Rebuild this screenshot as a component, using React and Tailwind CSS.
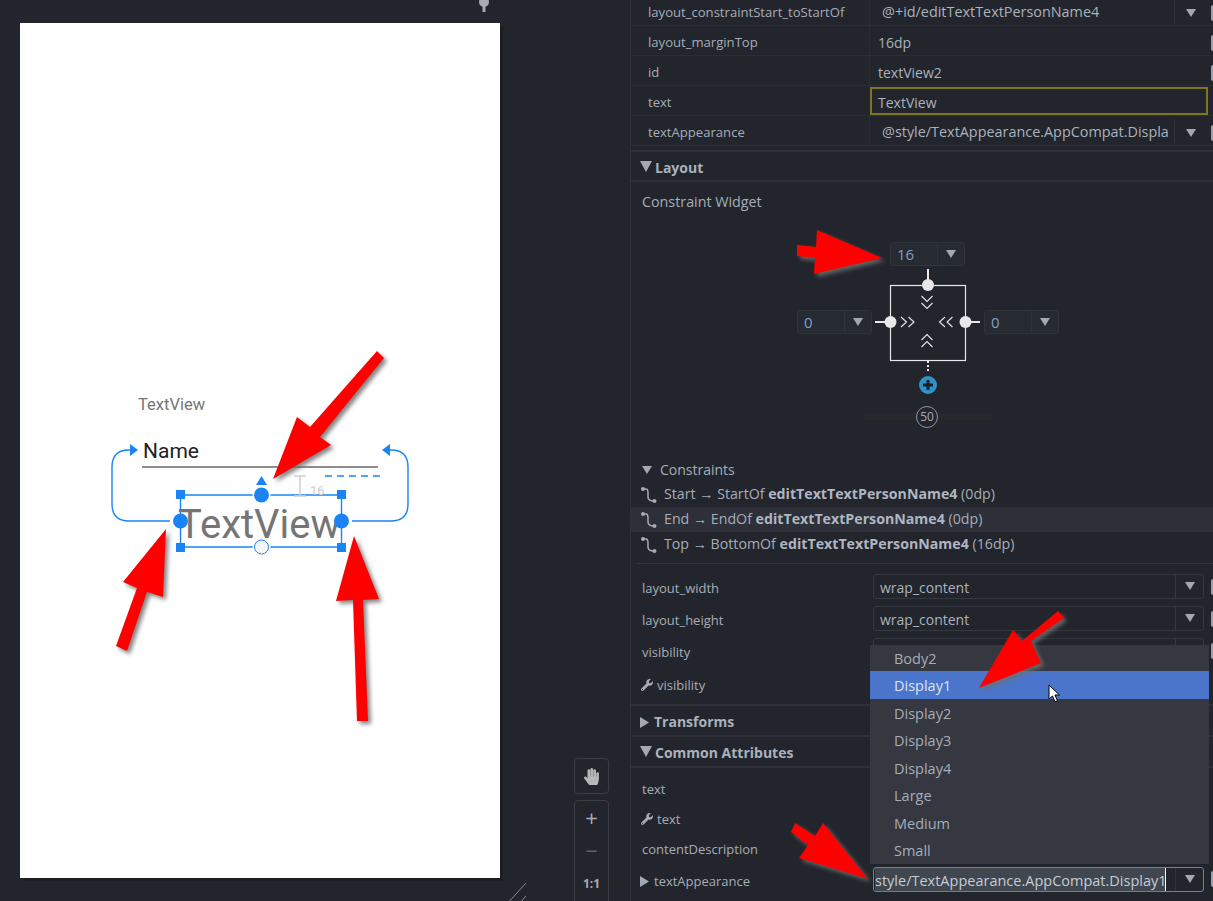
import React from "react";
import { FaWrench, FaHandPaper } from "react-icons/fa";

const Tri = ({ dir = "down", w, h, className = "" }) => {
  const pts = { down: "0,0 10,0 5,8", right: "0,0 9,5.5 0,11" }[dir];
  const vb = dir === "down" ? "0 0 10 8" : "0 0 9 11";
  return (
    <svg width={w || (dir === "down" ? 10 : 9)} height={h || (dir === "down" ? 8 : 11)} viewBox={vb} preserveAspectRatio="none" className={className}>
      <polygon points={pts} fill="#a3a9b3" />
    </svg>
  );
};

const Nub = () => <span className="absolute right-0 top-[9px] h-[16px] w-[2px] rounded-l-[2px] bg-[#9ba1ab]" />;

const TopRow = ({ label, value, drop, selected, big }) => (
  <div className="relative flex h-[30px] items-center border-b border-[#2b2e34]">
    <div className="w-[238px] shrink-0 pl-[17px] pt-[4px] text-[13.1px] text-[#a6adb7]">{label}</div>
    <div className={selected ? "ml-[1px] mr-[5px] flex h-[28px] flex-1 items-center border-[2px] border-[#7f7527] pl-[6px] text-[#aab2bd]" : "flex h-full flex-1 items-center border-l border-[#2b2e34] pl-[8px] text-[#aab2bd]"}>
      <span className={`pt-[4px] ${big ? "text-[14.4px]" : "text-[14px]"} ${drop ? "w-[296px] whitespace-nowrap pl-[4px]" : ""}`}>{value}</span>
      {drop && (
        <div className="flex h-[24px] w-[30px] items-center justify-center border-l border-[#2f3238] pl-[2px] pt-[4px]">
          <Tri />
        </div>
      )}
    </div>
    {(drop || !selected) && <Nub />}
  </div>
);

const Section = ({ title, open, className = "" }) => (
  <div className={`flex items-center gap-[3px] pl-[9px] text-[14px] font-bold text-[#a9b1bd] ${className}`}>
    <Tri dir={open ? "down" : "right"} w={open ? 12 : 9} h={open ? 11 : 11} className={open ? "-mt-[3px]" : "mr-[2px]"} />
    <span>{title}</span>
  </div>
);

const Squiggle = () => (
  <svg width="18" height="18" viewBox="0 0 18 18" className="shrink-0">
    <path d="M3 3 H6 C8 3 8 5 8 7 V11 C8 14 10 15 14 15" fill="none" stroke="#a5acb6" strokeWidth="1.5" />
    <circle cx="3" cy="3" r="2" fill="#a5acb6" />
    <circle cx="14.5" cy="15" r="2" fill="#a5acb6" />
  </svg>
);

const Constraint = ({ a, b, c, hi }) => (
  <div className={`flex h-[25px] items-center gap-[6px] pl-[9px] text-[14.2px] text-[#a6adb7] ${hi ? "bg-[#2d3038]" : ""}`}>
    <Squiggle />
    <span>
      {a} → {b} <b className="font-bold text-[#aeb6c2]">editTextTextPersonName4</b> ({c})
    </span>
  </div>
);

const NumDrop = ({ v, className = "" }) => (
  <div className={`flex h-[24px] w-[75px] items-center rounded-[3px] border border-[#2f333a] bg-[#262a31] ${className}`}>
    <span className="w-[46px] pl-[6px] text-[15px] text-[#7f9fc8]">{v}</span>
    <div className="flex h-full flex-1 items-center justify-center border-l border-[#2f333a]">
      <Tri />
    </div>
  </div>
);

const AttrRow = ({ label, value, wrench, tri, h = "h-[32px]" }) => (
  <div className={`relative flex items-center pl-[11px] ${h}`}>
    <div className="flex w-[231px] shrink-0 items-center gap-[4px] pt-[4px] text-[#a6adb7]">
      {wrench && <FaWrench className="-ml-[1px] text-[12px] text-[#a5acb6]" />}
      {tri && <Tri dir="right" className="-ml-[2px] mr-[1px]" />}
      <span>{label}</span>
    </div>
    {value && (
      <div className="flex h-[25px] w-[331px] items-center rounded-[3px] border border-[#33373e] pl-[6px] text-[14px] text-[#aab2bd]">
        <span className="flex-1 pt-[4px]">{value}</span>
        <div className="flex h-full w-[28px] items-center justify-center border-l border-[#33373e]">
          <Tri />
        </div>
      </div>
    )}
    {value && <Nub />}
  </div>
);

const popupItems = ["Body2", "Display1", "Display2", "Display3", "Display4", "Large", "Medium", "Small"];

const Arrows = () => (
  <svg width="1213" height="901" className="pointer-events-none absolute left-0 top-0 drop-shadow-[3px_3px_2px_rgba(110,110,110,0.85)]">
    <g fill="#ff0000">
      <polygon points="377,351 384,358 320,437 331,445 273,479 297,417 310,427" />
      <polygon points="166,529 163,597 147,592 127,651 116,646 137,588 123,582" />
      <polygon points="354,536 379,599 363,600 368,721 357,721 353,600 336,601" />
      <polygon points="882,258 817,230 816,247 797,245 797,256 815,258 814,274" />
      <polygon points="1058,611 1064,618 1031,641 1041,663 979,688 1013,630 1022,641" />
      <polygon points="795,823 815,836 823,823 868,879 799,858 808,845 791,832" />
    </g>
  </svg>
);

const Blueprint = () => (
  <svg width="480" height="855" className="absolute left-0 top-0">
    <g fill="none" stroke="#1a84f4" strokeWidth="1.4">
      <path d="M150 498 H109 C98 498 92 492 92 481 V444 C92 433 98 427 109 427 H112" />
      <path d="M332 498 H371 C382 498 388 492 388 481 V444 C388 433 382 427 371 427 H370" />
      <path d="M305 453 H361" strokeDasharray="7 5" />
      <path d="M160.500 472 H321.500 V524 H160.500 Z" />
    </g>
    <g fill="#1a84f4">
      <polygon points="110,421 118,427 110,433" />
      <polygon points="370,421 362,427 370,433" />
      <polygon points="236,462 247,462 241.500,453" />
      <rect x="156" y="467" width="9" height="9" />
      <rect x="317" y="467" width="9" height="9" />
      <rect x="156" y="520" width="9" height="9" />
      <rect x="317" y="520" width="9" height="9" />
      <circle cx="241.500" cy="472" r="9" fill="#fff" />
      <circle cx="241.500" cy="472" r="7.500" />
      <circle cx="241.500" cy="524" r="9" fill="#fff" />
      <circle cx="241.500" cy="524" r="7" fill="#f6f6f6" stroke="#1a84f4" strokeWidth="1" />
    </g>
    <path d="M274 453 H286 M280 453 V473 M274 473 H286" stroke="#cfcfcf" strokeWidth="1.500" fill="none" />
  </svg>
);

const SideHandles = () => (
  <svg width="480" height="855" className="absolute left-0 top-0">
    <g fill="#1a84f4">
      <circle cx="160.500" cy="498" r="7.500" />
      <circle cx="321.500" cy="498" r="7.500" />
    </g>
  </svg>
);

const Chev = ({ d }) => <path d={d} fill="none" stroke="#e8e8e8" strokeWidth="1.1" />;

const Widget = () => (
  <svg width="113" height="165" viewBox="871 265 113 165">
    <rect x="890.500" y="284.500" width="75" height="75" fill="none" stroke="#e8e8e8" strokeWidth="1.200" />
    <path d="M928 268 V284 M875 321 H890 M965 321 H980" stroke="#e8e8e8" strokeWidth="2" />
    <path d="M928 360 V372" stroke="#e8e8e8" strokeWidth="2" strokeDasharray="2 2" />
    <circle cx="928" cy="284" r="6" fill="#e8e8e8" />
    <circle cx="890.500" cy="321" r="6" fill="#e8e8e8" />
    <circle cx="965.500" cy="321" r="6" fill="#e8e8e8" />
    <Chev d="M921.500 295 L927 300.500 L932.500 295 M921.500 302 L927 307.500 L932.500 302" />
    <Chev d="M921.500 339 L927 333.500 L932.500 339 M921.500 346 L927 340.500 L932.500 346" />
    <Chev d="M901 316 L906.500 321 L901 326 M908.500 316 L914 321 L908.500 326" />
    <Chev d="M945 316 L939.500 321 L945 326 M952.500 316 L947 321 L952.500 326" />
    <circle cx="928" cy="384" r="9" fill="#2e92c9" />
    <path d="M928 379 V389 M923 384 H933" stroke="#16202a" strokeWidth="3" />
  </svg>
);

export default function App() {
  return (
    <div className="relative flex h-[901px] w-[1213px] overflow-hidden bg-[#22252c] font-['Open_Sans',sans-serif] text-[13px] leading-none">
      {/* Canvas */}
      <div className="relative w-[630px] shrink-0 pl-[20px] pt-[23px]">
        <div className="relative h-[855px] w-[480px] bg-white shadow-[3px_3px_0_#1b1e23] font-['Roboto',sans-serif]">
          <span className="absolute left-[118px] top-[372px] text-[16.5px] leading-[19px] text-[#757575]">TextView</span>
          <span className="absolute left-[123px] top-[416px] text-[21px] leading-[25px] text-[#212121]">Name</span>
          <div className="absolute left-[122px] top-[443px] h-[2px] w-[236px] bg-[#8e8e8e]" />
          <Blueprint />
          <span className="absolute left-[158px] top-[480px] whitespace-nowrap text-[40px] leading-[44px] text-[#757575]">TextView</span>
          <SideHandles />
          <span className="absolute left-[290px] top-[460px] text-[13px] leading-[15px] text-[#cccccc]">16</span>
        </div>
        <svg width="12" height="14" className="absolute left-[478px] top-0">
          <circle cx="6" cy="2" r="5" fill="#a8abb0" />
          <rect x="4.500" y="2" width="3" height="10" fill="#a8abb0" />
        </svg>
        <div className="absolute left-[574px] top-[758px] flex h-[36px] w-[35px] items-center justify-center rounded-[4px] border border-[#3a3d43]">
          <FaHandPaper className="text-[17px] text-[#b5b7ba]" />
        </div>
        <div className="absolute left-[574px] top-[800px] flex h-[110px] w-[35px] flex-col items-center rounded-[4px] border border-[#3a3d43] font-bold text-[#a8abb0]">
          <span className="mt-[4px] text-[22px] leading-[24px] font-normal">+</span>
          <span className="mt-[9px] text-[22px] leading-[24px] font-normal text-[#5c5f65]">−</span>
          <span className="mt-[15px] text-[12px] leading-[14px]">1:1</span>
        </div>
        <svg width="30" height="30" className="absolute left-[500px] top-[878px]">
          <path d="M6 27 L26 5 M18 27 L26 18" stroke="#85888d" strokeWidth="1" />
        </svg>
      </div>

      {/* Attributes panel */}
      <div className="relative flex-1 border-l border-[#2e3137]">
        <div className="-mt-[4px]">
          <TopRow label="layout_constraintStart_toStartOf" value="@+id/editTextTextPersonName4" drop big />
          <TopRow label="layout_marginTop" value="16dp" />
          <TopRow label="id" value="textView2" />
          <TopRow label="text" value="TextView" selected />
          <TopRow label="textAppearance" value="@style/TextAppearance.AppCompat.Displa" drop big />
        </div>
        <div className="mt-[4px] h-[2px] bg-[#2d3036]" />
        <Section title="Layout" open className="h-[30px] border-b-2 border-[#2d3036] pt-[4px]" />
        <div className="pl-[11px] pt-[13px] text-[14.3px] leading-[14px] text-[#a6adb7]">Constraint Widget</div>
        <div className="ml-[166px] mt-[33px] grid w-[262px] grid-cols-[74px_113px_75px]">
          <div />
          <NumDrop v="16" className="ml-[19px] h-[23px]" />
          <div />
          <NumDrop v="0" className="mt-[44px]" />
          <Widget />
          <NumDrop v="0" className="mt-[44px]" />
        </div>
        <div className="relative h-[27px]">
          <div className="absolute left-[233px] top-[-17px] h-[6px] w-[128px] bg-[#26282c]" />
          <div className="absolute left-[285px] top-[-25px] flex h-[22px] w-[22px] items-center justify-center rounded-full border border-[#9096a0] bg-[#22252c] text-[12px] text-[#a6adb7]">50</div>
        </div>
        <div className="flex h-[24px] items-center gap-[8px] pl-[11px] text-[14px] text-[#a6adb7]">
          <Tri />
          <span>Constraints</span>
        </div>
        <Constraint a="Start" b="StartOf" c="0dp" />
        <Constraint a="End" b="EndOf" c="0dp" hi />
        <Constraint a="Top" b="BottomOf" c="16dp" />
        <div className="ml-[6px] mt-[6px] h-px bg-[#33363c]" />
        <div className="mt-[6px]">
          <AttrRow label="layout_width" value="wrap_content" />
          <AttrRow label="layout_height" value="wrap_content" />
          <AttrRow label="visibility" value=" " h="h-[33px]" />
          <AttrRow label="visibility" wrench />
        </div>
        <div className="mt-[5px] h-[2px] bg-[#2d3036]" />
        <Section title="Transforms" className="h-[31px] border-b-2 border-[#2d3036] pt-[3px]" />
        <Section title="Common Attributes" open className="h-[31px] border-b-2 border-[#2d3036] pt-[3px]" />
        <div className="mt-[4px]">
          <AttrRow label="text" h="h-[30px]" />
          <AttrRow label="text" wrench h="h-[30px]" />
          <AttrRow label="contentDescription" h="h-[30px]" />
          <div className="relative flex h-[34px] items-center pl-[11px]">
            <div className="flex w-[231px] shrink-0 items-center gap-[4px] pt-[4px] text-[#a6adb7]">
              <Tri dir="right" className="-ml-[2px] mr-[1px]" />
              <span>textAppearance</span>
            </div>
            <div className="flex h-[25px] w-[331px] items-center rounded-[3px] border border-[#4b86d8] pl-[1px]">
              <span className="h-[23px] w-[292px] overflow-hidden whitespace-nowrap border-r border-white bg-[#40474f] text-[14.5px] leading-[25px] text-[#c4ccd6]">style/TextAppearance.AppCompat.Display1</span>
              <div className="ml-[9px] flex h-full w-[28px] items-center justify-center border-l border-[#2f333a]">
                <Tri />
              </div>
            </div>
            <Nub />
          </div>
        </div>

        {/* Dropdown popup */}
        <div className="absolute left-[239px] top-[645px] flex h-[219px] w-[339px] flex-col bg-[#353841]">
          {popupItems.map((it, i) => (
            <div key={it} className={`flex shrink-0 items-center pl-[24px] pt-[3px] text-[14.5px] ${i === 0 ? "h-[26px]" : "h-[27.5px]"} ${i === 1 ? "bg-[#4b75cb] text-[#dbe3f0]" : "text-[#a6adb7]"}`}>
              {it}
            </div>
          ))}
        </div>
      </div>

      <Arrows />
      <svg width="14" height="20" className="absolute left-[1048px] top-[684px]">
        <path d="M1 1 V15 L4.500 12 L7 18 L9.500 17 L7 11 H11.500 Z" fill="#fff" stroke="#000" strokeWidth="1" />
      </svg>
    </div>
  );
}
